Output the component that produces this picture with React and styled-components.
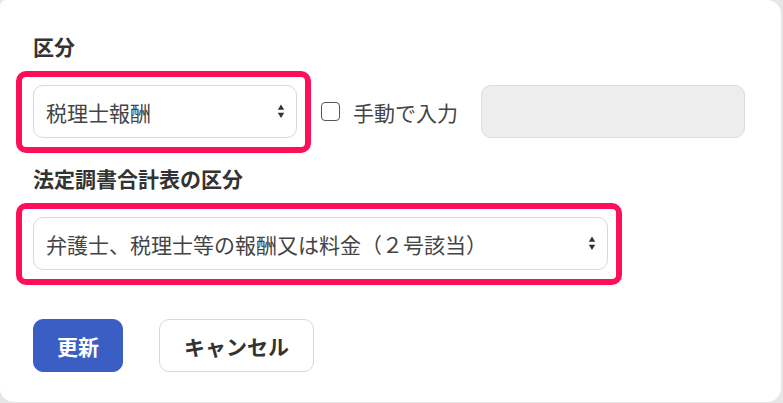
import React from "react";
import styled, { createGlobalStyle } from "styled-components";

const Global = createGlobalStyle`
  html, body { margin: 0; padding: 0; background: #e6e6e6; }
  body { font-family: "Noto Sans CJK JP", "Noto Sans", sans-serif; }
  * { box-sizing: border-box; }
`;

const Card = styled.div`
  width: 781px;
  height: 402px;
  background: #fff;
  border-radius: 6px 14px 14px 14px;
  padding: 31px 33px 0 33px;
  display: flex;
  flex-direction: column;
  color: #333;
`;

const Label = styled.div`
  font-size: 21px;
  line-height: 30px;
  font-weight: 700;
  color: #333;
  margin-top: ${(p) => p.$mt || 0}px;
`;

const Row = styled.div`
  display: flex;
  align-items: center;
  margin-top: ${(p) => p.$mt || 0}px;
`;

const Highlight = styled.div`
  position: relative;
  width: ${(p) => p.$w}px;
  flex: none;
  &::after {
    content: "";
    position: absolute;
    top: -14px;
    left: -17px;
    right: -14px;
    bottom: -15px;
    border: 6.5px solid #fd0f5a;
    border-radius: 10px;
    pointer-events: none;
  }
`;

const SelectBox = styled.div`
  position: relative;
  height: 53px;
  width: 100%;
  border: 1px solid #d9d9d9;
  border-radius: 10px;
  background: #fff;
  display: flex;
  align-items: center;
  padding: 0 11px 0 12px;
  font-size: 21px;
  color: #444;
  line-height: 30px;
`;

const SelectText = styled.span`
  flex: 1;
  white-space: nowrap;
`;

const ArrowIcon = () => (
  <svg width="8" height="15" viewBox="0 0 8 15" style={{ flex: "none" }}>
    <path d="M4 0.5 L7.2 5.8 L0.8 5.8 Z" fill="#333" />
    <path d="M4 14 L7.2 8.7 L0.8 8.7 Z" fill="#333" />
  </svg>
);

const CheckLabel = styled.label`
  display: flex;
  align-items: center;
  margin-left: 24px;
  font-size: 21px;
  line-height: 30px;
  color: #444;
  gap: 13px;
`;

const CheckBox = styled.span`
  width: 19px;
  height: 19px;
  border: 1.5px solid #555;
  border-radius: 4px;
  background: #fff;
  flex: none;
`;

const TextInput = styled.div`
  margin-left: 23px;
  width: 264px;
  height: 53px;
  background: #eeeded;
  border: 1px solid #dcdcdc;
  border-radius: 10px;
`;

const Buttons = styled.div`
  display: flex;
  gap: 36px;
  margin-top: 49px;
`;

const Button = styled.button`
  height: 53px;
  padding: 0;
  border-radius: 10px;
  font-family: inherit;
  font-size: 21px;
  font-weight: 700;
  line-height: 30px;
  white-space: nowrap;
  border: 1px solid ${(p) => (p.$primary ? "#3b5ec5" : "#d9d9d9")};
  background: ${(p) => (p.$primary ? "#3b5ec5" : "#fff")};
  color: ${(p) => (p.$primary ? "#fff" : "#333")};
  width: ${(p) => p.$w}px;
`;

export default function App() {
  return (
    <>
      <Global />
      <Card>
        <Label>区分</Label>
        <Row $mt={24}>
          <Highlight $w={264}>
            <SelectBox>
              <SelectText>税理士報酬</SelectText>
              <ArrowIcon />
            </SelectBox>
          </Highlight>
          <CheckLabel>
            <CheckBox />
            <span>手動で入力</span>
          </CheckLabel>
          <TextInput />
        </Row>
        <Label $mt={25}>法定調書合計表の区分</Label>
        <Row $mt={24}>
          <Highlight $w={575}>
            <SelectBox>
              <SelectText>弁護士、税理士等の報酬又は料金（２号該当）</SelectText>
              <ArrowIcon />
            </SelectBox>
          </Highlight>
        </Row>
        <Buttons>
          <Button $primary $w={90}>更新</Button>
          <Button $w={155}>キャンセル</Button>
        </Buttons>
      </Card>
    </>
  );
}
